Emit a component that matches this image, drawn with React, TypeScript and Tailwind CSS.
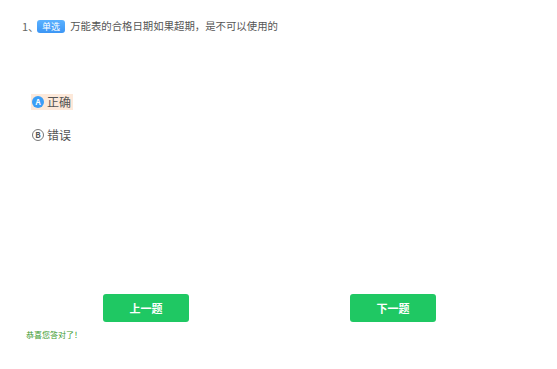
import React from "react";

const options = [
  { key: "A", label: "正确", selected: true },
  { key: "B", label: "错误", selected: false },
];

const App = () => {
  return (
    <div className="relative h-[369px] w-full bg-white font-['Noto_Sans_CJK_SC',sans-serif] text-[#555]">
      {/* question */}
      <div className="flex items-center pl-[22px] pt-[18px] text-[11px] leading-[16px]">
        <span className="text-[#666]">1、</span>
        <span className="-ml-[2px] rounded-[3px] bg-gradient-to-b from-[#5ab1ff] to-[#3c96f5] px-[5px] text-[9px] leading-[13px] text-white">
          单选
        </span>
        <span className="ml-[5px] text-[10.4px] text-[#555]">万能表的合格日期如果超期，是不可以使用的</span>
      </div>

      {/* options */}
      <div className="mt-[60px] flex flex-col gap-[17px] pl-[31px]">
        {options.map((o) => (
          <div key={o.key} className="flex">
            <div
              className={
                o.selected
                  ? "flex h-[16px] items-center gap-[3px] bg-[#fde9da] pl-[1px] pr-[2px]"
                  : "flex h-[16px] items-center gap-[3px] pl-[1px] pr-[2px]"
              }
            >
              {o.selected ? (
                <span className="flex h-[12px] w-[12px] items-center justify-center rounded-full bg-[#3b9ef6] text-[8px] font-bold leading-none text-white">
                  {o.key}
                </span>
              ) : (
                <span className="flex h-[12px] w-[12px] items-center justify-center rounded-full border border-[#777] text-[8px] font-bold leading-none text-[#555]">
                  {o.key}
                </span>
              )}
              <span className="text-[12px] leading-[16px] text-[#555]">{o.label}</span>
            </div>
          </div>
        ))}
      </div>

      {/* buttons */}
      <div className="absolute left-0 top-[294px] flex w-full">
        <button className="ml-[103px] h-[28px] w-[86px] rounded-[3px] bg-[#1fc863] text-[11px] font-bold text-white">
          上一题
        </button>
        <button className="ml-[161px] h-[28px] w-[86px] rounded-[3px] bg-[#1fc863] text-[11px] font-bold text-white">
          下一题
        </button>
      </div>

      <div className="absolute left-[26px] top-[329px] text-[8px] leading-[12px] text-[#3c9a2e]">恭喜您答对了！</div>
    </div>
  );
};

export default App;
